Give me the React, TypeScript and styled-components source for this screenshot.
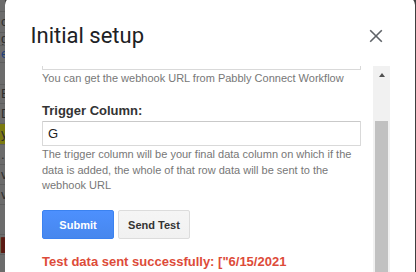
import React from "react";
import styled, { createGlobalStyle } from "styled-components";

const Global = createGlobalStyle`
  html, body { margin: 0; padding: 0; overflow: hidden; background: #3f3f3f; }
  #root { width: 416px; height: 272px; }
`;

const Screen = styled.div`
  display: flex;
  width: 416px;
  height: 272px;
  overflow: hidden;
  background: #3f3f3f;
`;

const SheetStrip = styled.div`
  width: 5px;
  flex: none;
  display: flex;
  flex-direction: column;
  background: #6c6c6c;
  overflow: hidden;
`;

const SheetCell = styled.div<{ $h: number; $bg?: string; $c?: string }>`
  height: ${(p) => p.$h}px;
  width: 5px;
  flex: none;
  box-sizing: border-box;
  overflow: hidden;
  border-bottom: 1px solid #5e5e5e;
  background: ${(p) => p.$bg || "transparent"};
  color: ${(p) => p.$c || "#2e2e2e"};
  font: 13px/${(p) => p.$h - 1}px "Liberation Sans", Arial, sans-serif;
  padding-left: 1px;
  white-space: nowrap;
`;

const Dialog = styled.div`
  width: 410px;
  flex: none;
  margin-top: -3px;
  height: 290px;
  background: #fff;
  border-radius: 8px 8px 0 0;
  display: flex;
  flex-direction: column;
`;

const Header = styled.div`
  display: flex;
  align-items: center;
  justify-content: space-between;
  padding: 24.5px 32px 16.5px 25.5px;
  flex: none;
`;

const Title = styled.h1`
  margin: 0;
  font: 400 22px/28px Roboto, "Noto Sans", sans-serif;
  color: #202124;
`;

const CloseButton = styled.button`
  border: 0;
  background: none;
  padding: 0;
  width: 14px;
  height: 14px;
  display: flex;
  cursor: pointer;
`;

const Body = styled.div`
  display: flex;
  flex: 1;
  min-height: 0;
  padding-left: 26px;
`;

const Frame = styled.div`
  width: 342px;
  flex: none;
  box-sizing: border-box;
  padding: 0 12px 0 11px;
  overflow: hidden;
`;

const ScrollContent = styled.div<{ $scroll: number }>`
  margin-top: -${(p) => p.$scroll}px;
  display: flex;
  flex-direction: column;
  gap: 16.5px;
  font-family: "Liberation Sans", Arial, sans-serif;
`;

const Field = styled.div`
  display: flex;
  flex-direction: column;
`;

const Label = styled.label`
  font: bold 13px/16px "Liberation Sans", Arial, sans-serif;
  color: #333;
  margin-bottom: 2px;
`;

const Input = styled.input`
  box-sizing: border-box;
  width: 100%;
  height: 25px;
  border: 1px solid #d9d9d9;
  border-top-color: #c9c9c9;
  border-radius: 1px;
  padding: 1px 5px;
  font: 13px "Liberation Sans", Arial, sans-serif;
  color: #222;
  outline: none;
`;

const Help = styled.div`
  margin-top: 1px;
  font: 11px/15.5px "Liberation Sans", Arial, sans-serif;
  color: #777;
`;

const ButtonRow = styled.div`
  display: flex;
  gap: 4px;
`;

const Button = styled.button<{ $primary?: boolean }>`
  box-sizing: border-box;
  height: 29px;
  min-width: 72px;
  padding: 0 8px;
  border-radius: 2px;
  font: bold 11px "Liberation Sans", Arial, sans-serif;
  border: 1px solid ${(p) => (p.$primary ? "#3b82f0" : "#dcdcdc")};
  color: ${(p) => (p.$primary ? "#fff" : "#333")};
  background: ${(p) =>
    p.$primary
      ? "linear-gradient(#4d90fe, #4787ed)"
      : "linear-gradient(#f5f5f5, #f1f1f1)"};
`;

const Message = styled.div`
  margin-top: -1.8px;
  font: bold 13px/16px "Liberation Sans", Arial, sans-serif;
  color: #dd4b39;
  white-space: nowrap;
`;

const Scrollbar = styled.div`
  width: 17px;
  flex: none;
  background: #f1f1f1;
  display: flex;
  flex-direction: column;
  align-items: center;
`;

const ArrowUp = styled.div`
  margin-top: 7px;
  width: 0;
  height: 0;
  border-left: 3.5px solid transparent;
  border-right: 3.5px solid transparent;
  border-bottom: 4px solid #505050;
`;

const Thumb = styled.div`
  margin-top: 44px;
  width: 13px;
  flex: 1;
  background: #c1c1c1;
`;

const sheetRows: { h: number; t: string; bg?: string; c?: string }[] = [
  { h: 12, t: "" },
  { h: 21, t: "c" },
  { h: 13, t: "g" },
  { h: 17, t: "e", c: "#1f3f7a" },
  { h: 22, t: "" },
  { h: 19, t: "E" },
  { h: 20, t: "D" },
  { h: 21, t: "y", bg: "#7b7a10" },
  { h: 20, t: "." },
  { h: 20, t: "ve" },
  { h: 20, t: "v" },
  { h: 30, t: "" },
  { h: 20, t: "▌", c: "#5a1a14" },
];

export default function App() {
  return (
    <>
      <Global />
      <Screen>
        <SheetStrip>
          {sheetRows.map((r, i) => (
            <SheetCell key={i} $h={r.h} $bg={r.bg} $c={r.c}>
              {r.t}
            </SheetCell>
          ))}
        </SheetStrip>
        <Dialog>
          <Header>
            <Title>Initial setup</Title>
            <CloseButton aria-label="Close">
              <svg width="14" height="14" viewBox="0 0 14 14">
                <path
                  d="M1.2 1.2L12.8 12.8M12.8 1.2L1.2 12.8"
                  stroke="#5f6368"
                  strokeWidth="1.6"
                  fill="none"
                />
              </svg>
            </CloseButton>
          </Header>
          <Body>
            <Frame>
              <ScrollContent $scroll={21}>
                <Field>
                  <Input defaultValue="" aria-label="Webhook URL" />
                  <Help>You can get the webhook URL from Pabbly Connect Workflow</Help>
                </Field>
                <Field>
                  <Label>Trigger Column:</Label>
                  <Input defaultValue="G" />
                  <Help>
                    The trigger column will be your final data column on which if the
                    data is added, the whole of that row data will be sent to the
                    webhook URL
                  </Help>
                </Field>
                <ButtonRow>
                  <Button $primary>Submit</Button>
                  <Button>Send Test</Button>
                </ButtonRow>
                <Message>Test data sent successfully: ["6/15/2021</Message>
              </ScrollContent>
            </Frame>
            <Scrollbar>
              <ArrowUp />
              <Thumb />
            </Scrollbar>
          </Body>
        </Dialog>
      </Screen>
    </>
  );
}
